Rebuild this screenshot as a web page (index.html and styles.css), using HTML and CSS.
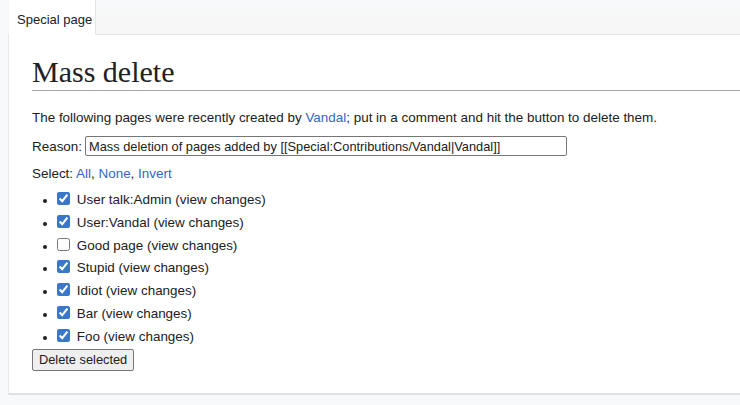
FILE: index.html
```html
<!DOCTYPE html>
<html>
<head>
<meta charset="utf-8">
<link rel="stylesheet" href="styles.css">
</head>
<body>
<div class="page">
  <div class="tabs">
    <div class="tab">Special page</div>
  </div>
  <div class="content">
    <h1 class="title">Mass delete</h1>
    <p class="intro">The following pages were recently created by <a href="#">Vandal</a>; put in a comment and hit the button to delete them.</p>
    <div class="reason">
      <label>Reason:</label>
      <input class="reason-input" type="text" value="Mass deletion of pages added by [[Special:Contributions/Vandal|Vandal]]">
    </div>
    <div class="select">Select: <a href="#">All</a>, <a href="#">None</a>, <a href="#">Invert</a></div>
    <ul class="pages">
      <li><input type="checkbox" checked> User talk:Admin (view changes)</li>
      <li><input type="checkbox" checked> User:Vandal (view changes)</li>
      <li><input type="checkbox"> Good page (view changes)</li>
      <li><input type="checkbox" checked> Stupid (view changes)</li>
      <li><input type="checkbox" checked> Idiot (view changes)</li>
      <li><input type="checkbox" checked> Bar (view changes)</li>
      <li><input type="checkbox" checked> Foo (view changes)</li>
    </ul>
    <button class="delete">Delete selected</button>
  </div>
</div>
</body>
</html>
```
FILE: styles.css
```css
html, body {
  margin: 0;
  padding: 0;
  background: #f8f9fa;
}
body {
  font-family: "Liberation Sans", Arial, sans-serif;
  color: #202122;
  font-size: 13.45px;
}
.page {
  padding-left: 8px;
}
.tabs {
  height: 34px;
  display: flex;
  align-items: flex-end;
  border-bottom: 1px solid #e2e4e6;
  background: linear-gradient(#f8f9fa, #f6f6f6);
}
.tab {
  box-sizing: border-box;
  width: 87px;
  margin-left: 1px;
  background: #ffffff;
  font-size: 13px;
  padding: 12px 0 0 8px;
  border-right: 1px solid #e4e6e8;
  margin-bottom: -1px;
  height: 35px;
}
.content {
  background: #ffffff;
  border-left: 1px solid #e8ebec;
  border-bottom: 2px solid #dde3e1;
  padding: 16px 0 22px 23px;
  box-sizing: border-box;
  height: 360px;
}
.title {
  font-family: "Liberation Serif", Georgia, serif;
  font-weight: normal;
  font-size: 30px;
  margin: 0;
  padding: 4px 0 1px;
  line-height: 34px;
  border-bottom: 1px solid #a2a9b1;
}
.intro {
  margin: 16px 0 0;
  line-height: 22px;
}
a {
  color: #3366cc;
  text-decoration: none;
}
.reason {
  display: flex;
  align-items: center;
  gap: 3px;
  margin-top: 6px;
  height: 22px;
}
.reason-input {
  font-family: "Liberation Sans", Arial, sans-serif;
  font-size: 12.8px;
  color: #202122;
  width: 482px;
  height: 20px;
  box-sizing: border-box;
  border: 1px solid #767676;
  border-radius: 2px;
  padding: 0 3px;
}
.select {
  margin-top: 6px;
  line-height: 22px;
}
.pages {
  margin: 4px 0 0;
  padding-left: 25px;
  list-style: disc;
}
.pages li {
  line-height: 22.8px;
  height: 22.8px;
}
.pages li::marker {
  font-size: 12px;
}
.pages input {
  width: 13px;
  height: 13px;
  margin: 0 3px 0 0;
  vertical-align: -1px;
  accent-color: #3a77c8;
}
.delete {
  margin-top: 0;
  font-family: "Liberation Sans", Arial, sans-serif;
  font-size: 12.8px;
  color: #202122;
  background: #efefef;
  border: 1px solid #767676;
  border-radius: 2px;
  padding: 1px 6px;
  height: 22px;
}
```
